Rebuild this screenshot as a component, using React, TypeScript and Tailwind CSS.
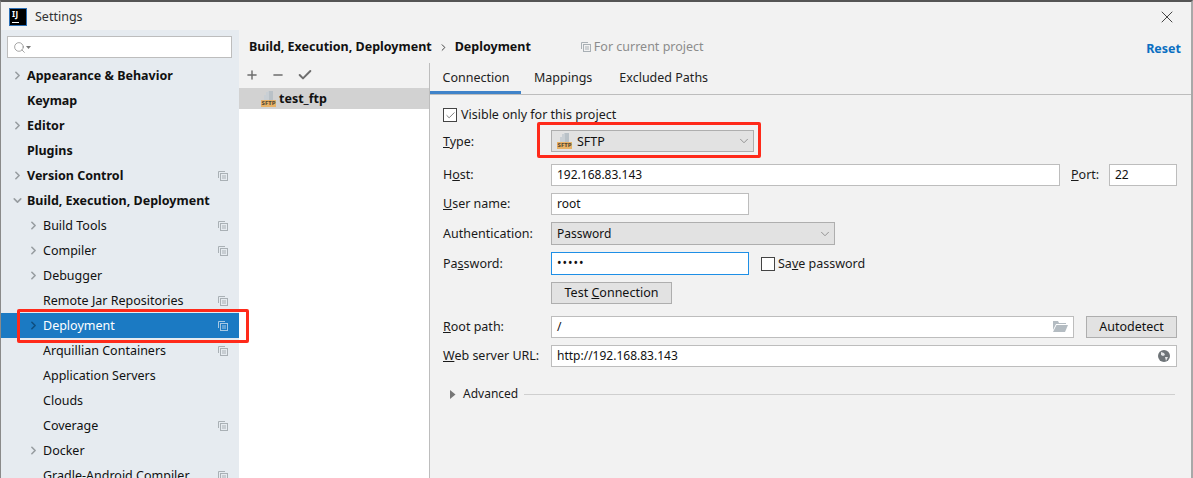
import type { ReactNode } from 'react'
import { Check, ChevronDown, ChevronRight, Minus, Plus, Search, X } from 'lucide-react'

const navItems = [
  { label: 'Appearance & Behavior', bold: true, arrow: true },
  { label: 'Keymap', bold: true },
  { label: 'Editor', bold: true, arrow: true },
  { label: 'Plugins', bold: true },
  { label: 'Version Control', bold: true, arrow: true, copy: true },
  { label: 'Build, Execution, Deployment', bold: true, open: true },
  { label: 'Build Tools', arrow: true, copy: true },
  { label: 'Compiler', arrow: true, copy: true },
  { label: 'Debugger', arrow: true },
  { label: 'Remote Jar Repositories', copy: true },
  { label: 'Deployment', arrow: true, copy: true, selected: true },
  { label: 'Arquillian Containers', copy: true },
  { label: 'Application Servers' },
  { label: 'Clouds' },
  { label: 'Coverage', copy: true },
  { label: 'Docker', arrow: true },
  { label: 'Gradle-Android Compiler', copy: true },
]

function CopyIcon({ className = 'text-[#a9b0b5]' }: { className?: string }) {
  return (
    <svg width="10" height="10" viewBox="0 0 10 10" fill="none" stroke="currentColor" className={className}>
      <path d="M.5 7V.5H7" />
      <rect x="2.5" y="2.5" width="7" height="7" />
      <path d="M4 5h4M4 7h4" />
    </svg>
  )
}

function SftpIcon() {
  return (
    <div className="relative h-[16px] w-[15px] shrink-0">
      <svg width="15" height="16" viewBox="0 0 15 16" className="block">
        <path d="M5 1h2V0h5v9H3V4h2z" fill="#c9cfd4" />
        <path d="M8 0h4v9H8z" fill="#b9c1c7" />
        <rect y="9" width="15" height="7" fill="#e8b266" />
      </svg>
      <span className="absolute left-0 top-[9px] w-full text-center text-[6px] leading-[7px] font-bold text-[#4f4534]">
        SFTP
      </span>
    </div>
  )
}

function NavRow({ item }: { item: (typeof navItems)[number] }) {
  const indent = item.bold ? 'pl-[26px]' : 'pl-[42px]'
  const arrowPos = item.bold ? 'left-[10px]' : 'left-[26px]'
  return (
    <div
      className={`relative flex h-[25px] shrink-0 items-center pr-[11px] ${indent} ${
        item.selected ? 'bg-[#1b7ac3] text-white' : 'text-[#111]'
      } ${item.bold ? 'font-bold' : ''}`}
    >
      {item.arrow && (
        <ChevronRight
          size={13}
          strokeWidth={3}
          className={`absolute ${arrowPos} ${item.selected ? 'text-[#0e4f80]' : 'text-[#989da1]'}`}
        />
      )}
      {item.open && (
        <ChevronDown size={13} strokeWidth={3} className="absolute left-[10px] text-[#989da1]" />
      )}
      <span className="flex-1 whitespace-nowrap">{item.label}</span>
      {item.copy && <CopyIcon className={item.selected ? 'text-[#a5c9e4]' : 'text-[#a9b0b5]'} />}
    </div>
  )
}

function Label({ children, tall }: { children: ReactNode; tall?: boolean }) {
  return (
    <div className={`w-[108px] shrink-0 whitespace-nowrap text-[#1a1a1a] ${tall ? 'pt-[1px]' : 'pb-[1px]'}`}>
      {children}
    </div>
  )
}

function Field({ children, className = '', focused }: { children?: ReactNode; className?: string; focused?: boolean }) {
  return (
    <div
      className={`flex items-center bg-white pb-[1px] pl-[5px] pr-[5px] text-[12px] text-[#111] border ${
        focused ? 'border-[#1e8fe6]' : 'border-[#bdbdbd]'
      } ${className}`}
    >
      {children}
    </div>
  )
}

function Select({ children, className = '' }: { children: ReactNode; className?: string }) {
  return (
    <div className={`flex items-center border border-[#aeaeae] bg-[#e2e2e2] pl-[5px] pr-[2px] text-[#111] ${className}`}>
      {children}
      <ChevronDown size={14} strokeWidth={1.5} className="ml-auto text-[#888]" />
    </div>
  )
}

function Button({ children, className = '' }: { children: ReactNode; className?: string }) {
  return (
    <div className={`flex items-center justify-center border border-[#aeaeae] bg-[#e2e2e2] pb-[1px] text-[#111] ${className}`}>
      <span>{children}</span>
    </div>
  )
}

export default function App() {
  return (
    <div
      className="relative flex h-[478px] w-[1193px] flex-col overflow-hidden border-t-2 border-l border-r-2 border-t-[#555] border-l-[#8a8a8a] border-r-[#a8a8a8] bg-[#f2f2f2] text-[12.5px] leading-[18px]"
      style={{ fontFamily: '"Noto Sans", "Noto Sans CJK SC", sans-serif' }}
    >
      {/* title bar */}
      <div className="flex h-[28px] shrink-0 items-center pl-[9px] pr-[14px] pt-[2px]">
        <div className="relative h-[16px] w-[16px] bg-black outline outline-[#2b6fb5]">
          <span className="absolute left-[2px] top-0 text-[8px] leading-[10px] font-bold tracking-[0.5px] text-white">IJ</span>
          <span className="absolute bottom-[2px] left-[2px] h-px w-[7px] bg-white" />
        </div>
        <span className="ml-[9px] text-[#333]">Settings</span>
        <X size={20} strokeWidth={1} className="ml-auto text-[#222]" />
      </div>

      <div className="flex min-h-0 flex-1">
        {/* sidebar */}
        <div className="flex w-[238px] shrink-0 flex-col bg-[#e6ebf0]">
          <div className="mb-[5px] ml-[6px] mr-[7px] mt-[6px] flex h-[22px] shrink-0 items-center border border-[#bdbdbd] bg-white pl-[5px]">
            <Search size={13} strokeWidth={1.2} className="text-[#777]" />
            <svg width="5" height="3" viewBox="0 0 5 3" className="text-[#777]" fill="currentColor">
              <path d="M0 0h5L2.5 3z" />
            </svg>
          </div>
          {navItems.map((item) => (
            <NavRow key={item.label} item={item} />
          ))}
        </div>

        <div className="flex min-w-0 flex-1 flex-col">
          {/* breadcrumb */}
          <div className="flex h-[33px] shrink-0 items-center pl-[10px] pr-[10px] pt-[1px]">
            <span className="font-bold text-[#111]">Build, Execution, Deployment</span>
            <ChevronRight size={11} strokeWidth={2} className="ml-[6px] mr-[6px] text-[#333]" />
            <span className="font-bold text-[#111]">Deployment</span>
            <CopyIcon className="ml-[50px] text-[#a9b0b5]" />
            <span className="ml-[3px] text-[#8c8c8c]">For current project</span>
            <span className="ml-auto pt-[4px] font-bold text-[#0a6fc2]">Reset</span>
          </div>

          <div className="flex min-h-0 flex-1">
            {/* deployment list */}
            <div className="flex w-[191px] shrink-0 flex-col border-r border-[#bdbdbd]">
              <div className="flex h-[25px] shrink-0 items-center gap-[12px] pb-[1px] pl-[6px] text-[#6e6e6e]">
                <Plus size={14} strokeWidth={2.5} />
                <Minus size={14} strokeWidth={2.5} />
                <Check size={16} strokeWidth={3} />
              </div>
              <div className="flex h-[21px] shrink-0 items-center gap-[3px] bg-[#d2d2d2] pl-[22px] font-bold text-[#111]">
                <SftpIcon />
                <span>test_ftp</span>
              </div>
              <div className="flex-1 bg-white" />
            </div>

            {/* connection form */}
            <div className="min-w-0 flex-1">
              <div className="flex h-[32px] items-stretch border-b border-[#bdbdbd]">
                <div className="flex w-[91px] items-center justify-center border-b-[3px] border-[#4083c9] pl-[1px] pt-[2px] text-[#222]">
                  Connection
                </div>
                <div className="ml-[13px] flex items-center pb-[1px] text-[#222]">Mappings</div>
                <div className="ml-[27px] flex items-center pb-[1px] text-[#222]">Excluded Paths</div>
              </div>

              <div className="flex flex-col pl-[13px] pr-[14px]">
                <div className="mt-[12px] flex h-[16px] items-center gap-[4px] text-[#1a1a1a]">
                  <div className="flex h-[14px] w-[14px] items-center justify-center border border-[#444] bg-white">
                    <Check size={11} strokeWidth={1.5} className="text-[#444]" />
                  </div>
                  Visible only for this project
                </div>

                <div className="mt-[7px] flex items-center">
                  <Label tall><u>T</u>ype:</Label>
                  <Select className="h-[22px] w-[203px]">
                    <SftpIcon />
                    <span className="ml-[5px] pt-[1px]">SFTP</span>
                  </Select>
                </div>

                <div className="mt-[12px] flex items-center">
                  <Label>H<u>o</u>st:</Label>
                  <Field className="h-[22px] w-[509px]">192.168.83.143</Field>
                  <div className="ml-[11px] w-[38px] shrink-0 pb-[1px] text-[#1a1a1a]"><u>P</u>ort:</div>
                  <Field className="h-[22px] w-[68px]">22</Field>
                </div>

                <div className="mt-[7px] flex items-center">
                  <Label><u>U</u>ser name:</Label>
                  <Field className="h-[22px] w-[198px]">root</Field>
                </div>

                <div className="mt-[7px] flex items-center">
                  <Label tall>Authentication:</Label>
                  <Select className="h-[23px] w-[284px]">
                    <span className="text-[12px]">Password</span>
                  </Select>
                </div>

                <div className="mt-[7px] flex items-center">
                  <Label tall>Pa<u>s</u>sword:</Label>
                  <Field focused className="h-[23px] w-[198px] tracking-[1px]">•••••</Field>
                  <div className="ml-[12px] h-[14px] w-[14px] border border-[#444] bg-white" />
                  <span className="ml-[3px] text-[#1a1a1a]">Sa<u>v</u>e password</span>
                </div>

                <div className="mt-[7px] flex pl-[108px]">
                  <Button className="h-[22px] w-[121px]">Test <u>C</u>onnection</Button>
                </div>

                <div className="mt-[12px] flex items-center">
                  <Label><u>R</u>oot path:</Label>
                  <Field className="h-[22px] w-[523px]">
                    /
                    <svg width="15" height="11" viewBox="0 0 15 11" className="ml-auto text-[#b4bcc2]" fill="currentColor">
                      <path d="M0 0h5l1 2h7v1H3L0 9z" />
                      <path d="M3.5 4H15l-3 7H0z" />
                    </svg>
                  </Field>
                  <Button className="ml-[12px] h-[22px] w-[91px]">Autodetect</Button>
                </div>

                <div className="mt-[7px] flex items-center">
                  <Label><u>W</u>eb server URL:</Label>
                  <Field className="h-[22px] w-[626px]">
                    http://192.168.83.143
                    <svg width="12" height="12" viewBox="0 0 12 12" className="ml-auto mr-[1px]">
                      <circle cx="6" cy="6" r="6" fill="#6e7478" />
                      <path d="M3 2l3 1 1 2-2 1-2-1zM7 7l3 0-2 4z" fill="#e4e6e8" />
                    </svg>
                  </Field>
                </div>

                <div className="mt-[18px] flex h-[18px] items-center pl-[7px]">
                  <svg width="6" height="9" viewBox="0 0 6 9" className="text-[#777]" fill="currentColor">
                    <path d="M0 0l5.5 4.5L0 9z" />
                  </svg>
                  <span className="ml-[7px] text-[12px] text-[#1a1a1a]">Advanced</span>
                  <div className="ml-[6px] mr-[2px] h-px flex-1 bg-[#cfcfcf]" />
                </div>
              </div>
            </div>
          </div>
        </div>
      </div>

      {/* red annotation boxes */}
      <div className="absolute left-[16px] top-[307px] h-[34px] w-[232px] rounded-[2px] border-[3px] border-[#ff2a1a]" />
      <div className="absolute left-[536px] top-[120px] h-[36px] w-[224px] rounded-[2px] border-[3px] border-[#ff2a1a]" />
    </div>
  )
}
